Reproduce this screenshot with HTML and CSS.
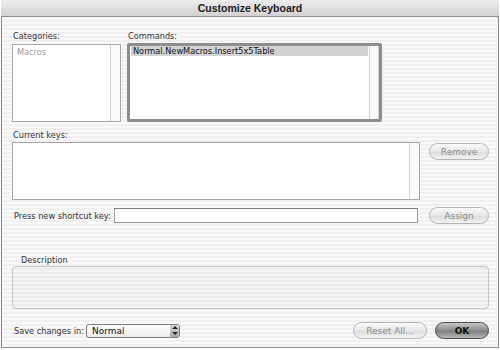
FILE: index.html
```html
<!DOCTYPE html>
<html lang="en">

<head>
    <meta charset="UTF-8">
    <title>Customize Keyboard</title>
    <link rel="stylesheet" href="styles.css">
</head>

<body>
    <div class="window">
        <div class="titlebar">Customize Keyboard</div>

        <div class="content">
            <div class="lists">
                <div class="col col-cat">
                    <div class="label">Categories:</div>
                    <div class="listbox">
                        <div class="items">
                            <div class="item dim">Macros</div>
                        </div>
                        <div class="scroll"></div>
                    </div>
                </div>
                <div class="col col-cmd">
                    <div class="label">Commands:</div>
                    <div class="listbox focused">
                        <div class="items">
                            <div class="item selected">Normal.NewMacros.Insert5x5Table</div>
                        </div>
                        <div class="scroll"></div>
                    </div>
                </div>
            </div>

            <div class="label keys-label">Current keys:</div>
            <div class="row keys-row">
                <div class="listbox keys">
                    <div class="items"></div>
                    <div class="scroll"></div>
                </div>
                <button class="btn disabled">Remove</button>
            </div>

            <div class="row shortcut-row">
                <label class="label" for="shortcut">Press new shortcut key:</label>
                <input type="text" id="shortcut" class="field">
                <button class="btn disabled">Assign</button>
            </div>

            <div class="label group-label">Description</div>
            <div class="group"></div>

            <div class="row footer">
                <span class="label">Save changes in:</span>
                <div class="select">
                    <span>Normal</span>
                    <span class="stepper">
                        <svg width="6" height="9" viewBox="0 0 6 9">
                            <path d="M3 0 L6 3 L0 3 Z M3 9 L6 6 L0 6 Z" fill="#222" />
                        </svg>
                    </span>
                </div>
                <div class="spacer"></div>
                <button class="btn disabled reset">Reset All...</button>
                <button class="btn default">OK</button>
            </div>
        </div>
    </div>
</body>

</html>
```

FILE: styles.css
```css
body {
    margin: 0;
    padding: 0;
    font-family: "DejaVu Sans", sans-serif;
    font-size: 8.2px;
    color: #222;
    background: #fff;
}

.window {
    width: 496px;
    height: 347px;
    border: 1px solid #8c8c8c;
    border-top: none;
    margin-left: 1px;
    background: repeating-linear-gradient(#f0f0f0 0 2px, #f9f9f9 2px 4px);
}

.titlebar {
    height: 16px;
    line-height: 16px;
    text-align: center;
    font-family: "Liberation Sans", Arial, sans-serif;
    font-weight: bold;
    font-size: 10.5px;
    color: #1a1a1a;
    background: linear-gradient(#ededed, #d2d2d2);
    border-bottom: 1px solid #8f8f8f;
    margin: 0 -1px;
}

.content {
    padding: 14px 9px 0 10px;
}

.label {
    color: #333;
    white-space: nowrap;
    box-sizing: border-box;
}

.lists {
    display: flex;
    gap: 6px;
}

.col .label {
    height: 12px;
    margin-bottom: 1px;
    padding-left: 1px;
}

.listbox {
    display: flex;
    background: #fff;
    border: 1px solid #a8a8a8;
    box-sizing: border-box;
}

.items {
    flex: 1;
    padding: 1px 2px;
}

.item {
    height: 10px;
    line-height: 10px;
    padding-left: 2px;
    white-space: nowrap;
}

.item.dim {
    color: #999;
    margin-top: 1px;
}

.item.selected {
    background: #d3d3d3;
    color: #111;
}

.scroll {
    width: 9px;
    border-left: 1px solid #d0d0d0;
    background: #fafafa;
}

.col-cat .listbox {
    width: 109px;
    height: 78px;
}

.col-cmd .listbox {
    width: 255px;
    height: 79px;
    margin-top: -1px;
}

.listbox.focused {
    border: 3px solid #8e8e8e;
    border-radius: 2px;
}

.listbox.focused .items {
    padding: 0 1px;
}

.listbox.focused .scroll {
    width: 8px;
    border-right: 1px solid #d0d0d0;
}

.keys-label {
    margin-top: 8px;
    padding-left: 1px;
    height: 12px;
}

.row {
    display: flex;
    align-items: flex-start;
}

.keys-row {
    gap: 9px;
}

.keys {
    width: 409px;
    height: 58px;
}

.btn {
    width: 60px;
    height: 17px;
    border-radius: 9px;
    border: 1px solid #9c9c9c;
    background: linear-gradient(#fbfbfb, #e6e6e6 50%, #dcdcdc 51%, #f2f2f2);
    font-family: "DejaVu Sans", sans-serif;
    font-size: 9px;
    color: #222;
    padding: 0;
}

.btn.disabled {
    color: #8a8a8a;
    border-color: #b4b4b4;
}

.keys-row .btn {
    margin-top: 1px;
}

.shortcut-row {
    margin-top: 7px;
    align-items: center;
}

.shortcut-row .label {
    width: 102px;
    padding-left: 2px;
}

.field {
    width: 305px;
    height: 15px;
    border: 1px solid #9a9a9a;
    border-top-color: #7e7e7e;
    background: #fff;
    padding: 0;
    margin: 0 11px 0 0;
    box-sizing: border-box;
}

.group-label {
    margin-top: 31px;
    height: 11px;
    padding-left: 9px;
}

.group {
    width: 477px;
    height: 43px;
    border: 1px solid #c4c4c4;
    border-radius: 4px;
    box-sizing: border-box;
    background: rgba(0, 0, 0, 0.015);
}

.footer {
    margin-top: 13px;
    align-items: center;
}

.footer .label {
    width: 74px;
    padding-left: 2px;
}

.select {
    width: 94px;
    height: 14px;
    border: 1px solid #7c7c7c;
    border-radius: 3px;
    background: linear-gradient(#ffffff, #eaeaea);
    display: flex;
    align-items: center;
    justify-content: space-between;
    box-sizing: border-box;
    padding-left: 5px;
    color: #111;
    font-size: 9px;
}

.stepper {
    width: 9px;
    height: 12px;
    background: linear-gradient(#d8d8d8, #a8a8a8);
    border-radius: 0 2px 2px 0;
    display: flex;
    align-items: center;
    justify-content: center;
}

.spacer {
    flex: 1;
}

.btn.reset {
    width: 74px;
    margin-right: 8px;
}

.btn.default {
    width: 54px;
    border-color: #4e4e4e;
    background: linear-gradient(#c8c8c8, #8a8a8a 50%, #7a7a7a 51%, #b8b8b8);
    font-weight: bold;
    color: #111;
}
```
